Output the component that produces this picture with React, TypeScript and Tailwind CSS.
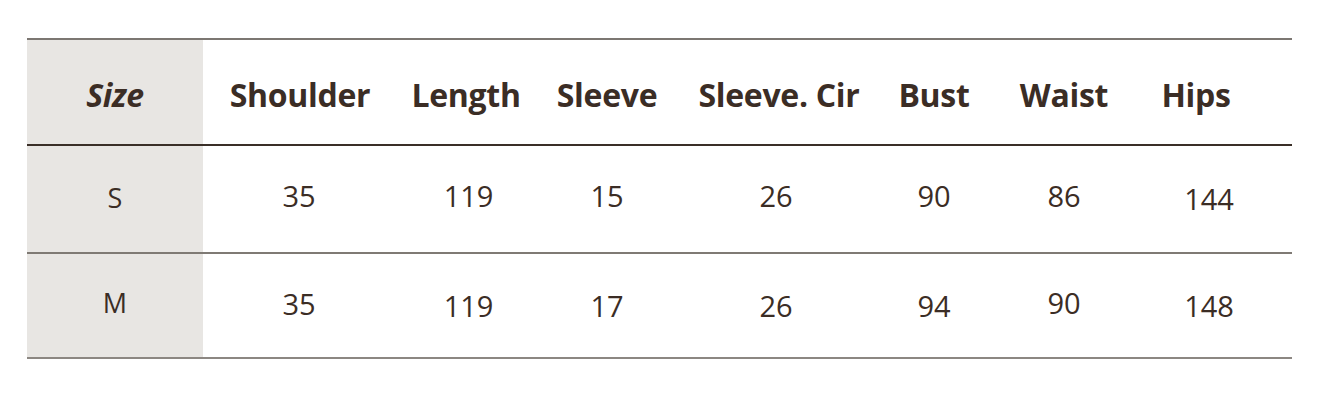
const COLS = 'grid grid-cols-[176px_194px_138px_144px_200px_110px_150px_122px_1fr]';

const HEADERS = ['Shoulder', 'Length', 'Sleeve', 'Sleeve. Cir', 'Bust', 'Waist', 'Hips'];
const HEAD_NUDGE = ['', '', '', '', '', '', 'pr-[8px]'];

// small nudges so the numbers sit where the original artwork put them
const NUDGE = ['pr-[2px]', 'pl-[5px]', '', 'pr-[6px]', '', '', 'pl-[18px]'];

const ROWS = [
  { size: 'S', h: 'h-[106px]', values: ['35', '119', '15', '26', '90', '86', '144'], drop: ['pb-[6px]', 'pb-[6px]', 'pb-[6px]', 'pb-[6px]', 'pb-[6px]', 'pb-[6px]', 'pt-[0px]'] },
  { size: 'M', h: 'h-[103px]', values: ['35', '119', '17', '26', '94', '90', '148'], drop: ['pb-[4px]', '', '', '', '', 'pb-[6px]', ''] },
];

const App = () => {
  return (
    <div className="w-[1328px] h-[400px] bg-white pl-[27px] pt-[38px] font-['Open_Sans',sans-serif] text-[#3b2d25]">
      <div className="w-[1265px]">
        <div className="h-[2px] bg-[#7c7772]" />
        <div className={`${COLS} h-[104px] items-center`}>
          <div className="flex h-full items-center justify-center bg-[#e8e6e3] pt-[6px] text-[32px] font-bold italic tracking-[-0.3px]">
            Size
          </div>
          {HEADERS.map((h, j) => (
            <div key={h} className={`flex h-full items-center justify-center whitespace-nowrap pt-[6px] text-[32px] font-bold tracking-[-0.3px] ${HEAD_NUDGE[j]}`}>
              {h}
            </div>
          ))}
          <div />
        </div>
        <div className="h-[2px] bg-[#3a2f28]" />
        {ROWS.map((row, i) => (
          <div key={row.size}>
            <div className={`${COLS} ${row.h}`}>
              <div className={`flex h-full items-center justify-center bg-[#e8e6e3] text-[27px] ${i === 0 ? 'pb-[2px]' : 'pb-[4px]'}`}>
                {row.size}
              </div>
              {row.values.map((v, j) => (
                <div
                  key={j}
                  className={`flex h-full items-center justify-center text-[29px] font-normal ${NUDGE[j]} ${row.drop[j]}`}
                >
                  {v}
                </div>
              ))}
              <div />
            </div>
            <div className={`h-[2px] ${i === 0 ? 'bg-[#7f7a74]' : 'bg-[#8c8782]'}`} />
          </div>
        ))}
      </div>
    </div>
  );
};

export default App;
